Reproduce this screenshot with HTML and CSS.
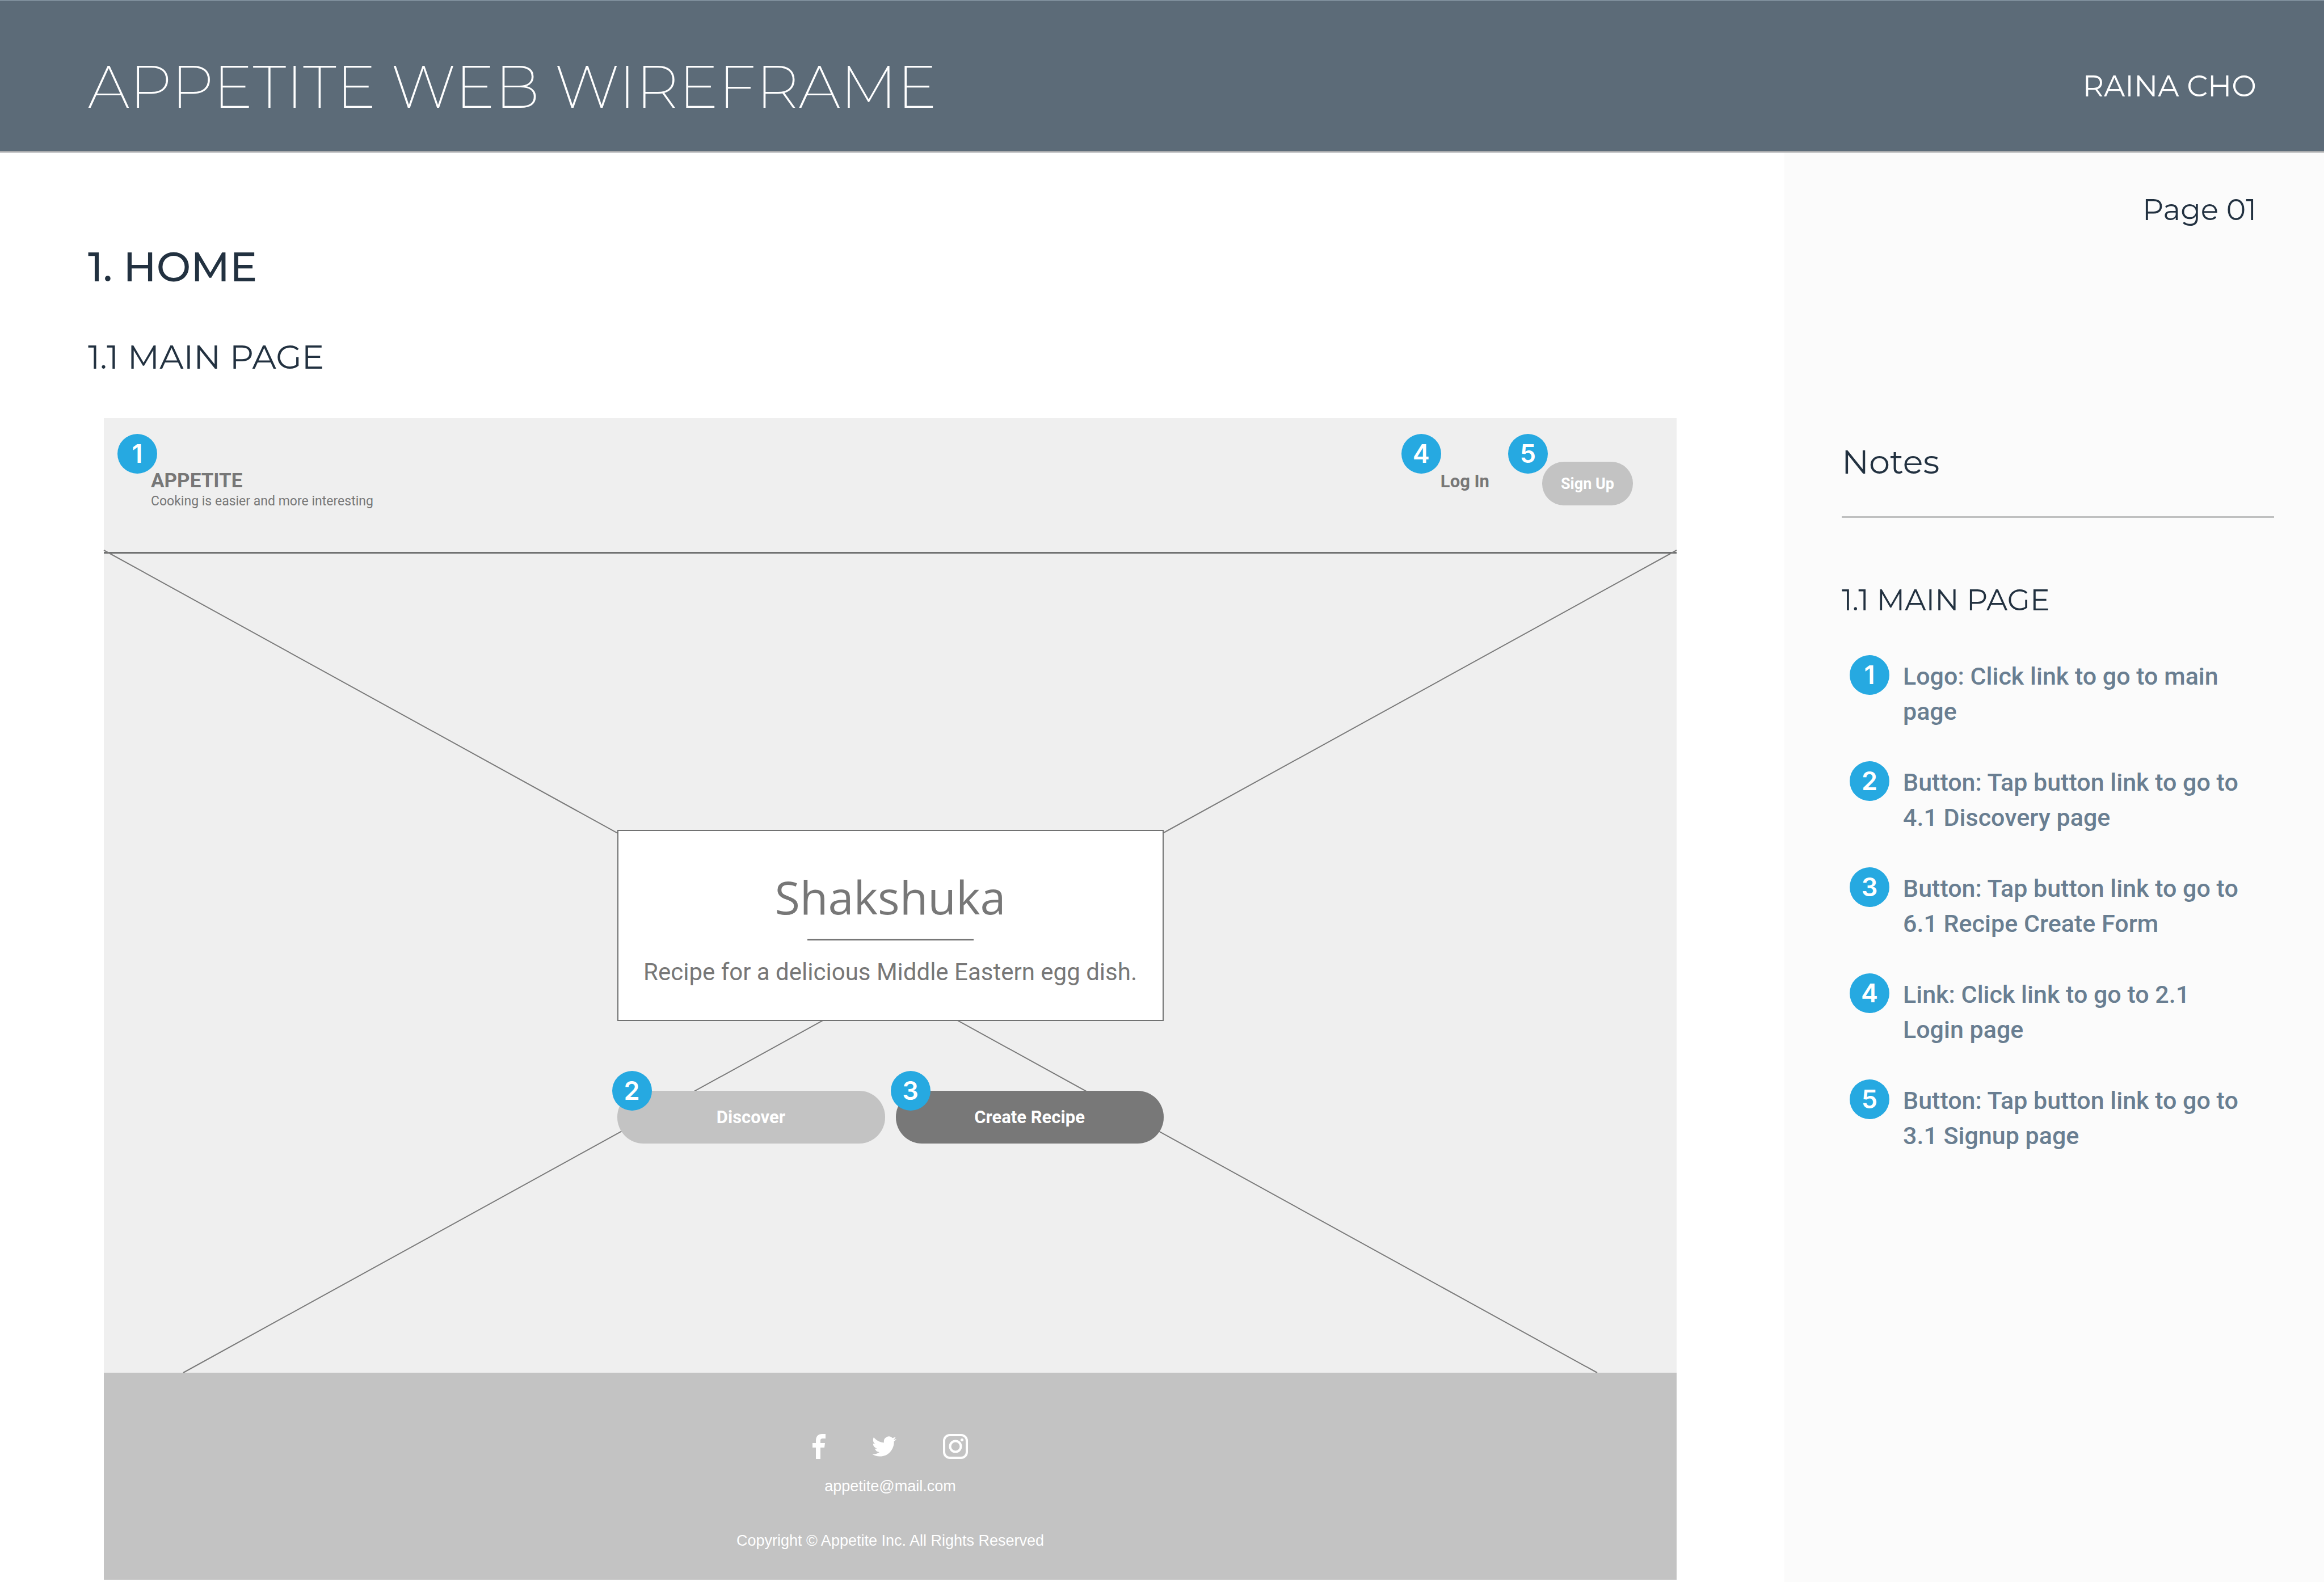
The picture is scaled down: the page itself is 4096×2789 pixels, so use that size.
FILE: index.html
```html
<!DOCTYPE html>
<html lang="en">
<head>
<meta charset="utf-8">
<meta name="viewport" content="width=device-width, initial-scale=1">
<title>Appetite Web Wireframe</title>
<link rel="stylesheet" href="styles.css">
</head>
<body>
<header class="doc-header">
  <h1 class="doc-title">APPETITE WEB WIREFRAME</h1>
  <p class="doc-author">RAINA CHO</p>
</header>
<div class="doc-body">
  <main class="doc-main">
    <h2 class="section-title">1. HOME</h2>
    <h3 class="section-subtitle">1.1 MAIN PAGE</h3>
    <div class="mock">
      <span class="badge badge-brand">1</span>
      <div class="mock-nav">
        <a class="brand" href="#">
          <span class="brand-name">APPETITE</span>
          <span class="brand-tagline">Cooking is easier and more interesting</span>
        </a>
        <nav class="nav-actions">
          <div class="anchor">
            <a class="login" href="#">Log In</a>
            <span class="badge badge-login">4</span>
          </div>
          <div class="anchor">
            <button class="signup" type="button">Sign Up</button>
            <span class="badge badge-signup">5</span>
          </div>
        </nav>
      </div>
      <div class="hero">
        <svg class="hero-cross" viewBox="0 0 2772 1444" preserveAspectRatio="none" aria-hidden="true">
          <path d="M0-6 2632 1444M2772-6 140 1444" fill="none" stroke="#7b7b7b" stroke-width="2"/>
        </svg>
        <section class="hero-card">
          <h4 class="hero-title">Shakshuka</h4>
          <hr class="hero-rule">
          <p class="hero-text">Recipe for a delicious Middle Eastern egg dish.</p>
        </section>
        <div class="hero-buttons">
          <div class="anchor">
            <button class="hero-button" type="button">Discover</button>
            <span class="badge badge-button">2</span>
          </div>
          <div class="anchor">
            <button class="hero-button hero-button-dark" type="button">Create Recipe</button>
            <span class="badge badge-button">3</span>
          </div>
        </div>
      </div>
      <footer class="mock-footer">
        <div class="social">
          <a href="#" aria-label="Facebook"><svg width="23" height="44" viewBox="0 0 23 44"><path d="M6 44V24H0v-8h6v-4C6 4 10 0 17 0h6v8h-4c-4 0-5 1-5 4v4h8l-1 8h-7v20z" fill="#fff"/></svg></a>
          <a href="#" aria-label="Twitter"><svg width="43" height="36" viewBox="0 2 24 20" preserveAspectRatio="none"><path d="M23.953 4.57a10 10 0 0 1-2.825.775 4.958 4.958 0 0 0 2.163-2.723c-.951.555-2.005.959-3.127 1.184a4.92 4.92 0 0 0-8.384 4.482C7.69 8.095 4.067 6.13 1.64 3.162a4.822 4.822 0 0 0-.666 2.475c0 1.71.87 3.213 2.188 4.096a4.904 4.904 0 0 1-2.228-.616v.06a4.923 4.923 0 0 0 3.946 4.827 4.996 4.996 0 0 1-2.212.085 4.936 4.936 0 0 0 4.604 3.417 9.867 9.867 0 0 1-6.102 2.105c-.39 0-.779-.023-1.17-.067a13.995 13.995 0 0 0 7.557 2.209c9.053 0 13.998-7.496 13.998-13.985 0-.21 0-.42-.015-.63A9.935 9.935 0 0 0 24 4.59z" fill="#fff"/></svg></a>
          <a href="#" aria-label="Instagram"><svg width="44" height="44" viewBox="0 0 44 44" fill="none" stroke="#fff" stroke-width="4"><rect x="2" y="2" width="40" height="40" rx="10"/><circle cx="22" cy="22" r="9.5"/><circle cx="33.500" cy="10.500" r="2.600" fill="#fff" stroke="none"/></svg></a>
        </div>
        <a class="footer-mail" href="mailto:appetite@mail.com">appetite@mail.com</a>
        <p class="footer-copy">Copyright © Appetite Inc. All Rights Reserved</p>
      </footer>
    </div>
  </main>
  <aside class="doc-notes">
    <p class="page-number">Page 01</p>
    <h2 class="notes-title">Notes</h2>
    <h3 class="notes-subtitle">1.1 MAIN PAGE</h3>
    <ol class="notes-list">
      <li><span class="badge">1</span><p>Logo: Click link to go to main page</p></li>
      <li><span class="badge">2</span><p>Button: Tap button link to go to 4.1 Discovery page</p></li>
      <li><span class="badge">3</span><p>Button: Tap button link to go to 6.1 Recipe Create Form</p></li>
      <li><span class="badge">4</span><p>Link: Click link to go to 2.1 Login page</p></li>
      <li><span class="badge">5</span><p>Button: Tap button link to go to 3.1 Signup page</p></li>
    </ol>
  </aside>
</div>
</body>
</html>
```
FILE: styles.css
```css
:root {
  --ink: #223140;
  --slate: #5c6b78;
  --note: #697e91;
  --blue: #26a9e1;
  --gray: #777;
  --silver: #c3c3c3;
  --heading-font: Montserrat, Inter, sans-serif;
  --body-font: Roboto, sans-serif;
}

* {
  box-sizing: border-box;
}

body {
  display: flex;
  flex-direction: column;
  min-height: 100vh;
  margin: 0;
  background: #fff;
  color: var(--ink);
  font-family: var(--body-font);
}

h1, h2, h3, h4, p, ol {
  margin: 0;
  padding: 0;
}

a {
  color: inherit;
  text-decoration: none;
}

button {
  border: 0;
  padding: 0;
  color: #fff;
  font-family: inherit;
  font-weight: 700;
  cursor: pointer;
}

/* Document header */
.doc-header {
  display: flex;
  align-items: center;
  justify-content: space-between;
  height: 269px;
  padding: 36px 119px 0 155px;
  border-top: 1px solid #93a3b0;
  border-bottom: 3px solid #a9abad;
  background: var(--slate);
  color: #fff;
  font-family: var(--heading-font);
}

.doc-title {
  font-size: 105px;
  font-weight: 200;
  line-height: 120px;
}

.doc-author {
  font-size: 52px;
  line-height: 64px;
}

.doc-body {
  display: grid;
  flex: 1;
  grid-template-columns: minmax(0, 1fr) 951px;
}

.doc-main {
  padding: 159px 190px 4px 155px;
}

.section-title,
.section-subtitle,
.page-number,
.notes-title,
.notes-subtitle {
  font-family: var(--heading-font);
  font-weight: 400;
}

.section-title {
  font-size: 72px;
  font-weight: 500;
  line-height: 84px;
}

.section-subtitle {
  margin-top: 81px;
  font-size: 59px;
  line-height: 72px;
}

/* Numbered callouts */
.badge {
  display: flex;
  flex: none;
  align-items: center;
  justify-content: center;
  width: 70px;
  height: 70px;
  border-radius: 50%;
  background: var(--blue);
  color: #fff;
  font-family: Inter, sans-serif;
  font-size: 45px;
  font-weight: 600;
  line-height: 70px;
}

.anchor,
.mock {
  position: relative;
}

.anchor .badge,
.badge-brand {
  position: absolute;
  z-index: 1;
}

.badge-brand {
  top: 28px;
  left: 24px;
}

.anchor .badge-login {
  top: -49px;
  left: -69px;
}

.anchor .badge-signup {
  top: -49px;
  left: -60px;
}

.anchor .badge-button {
  top: -35px;
  left: -9px;
}

/* Wireframe */
.mock {
  margin: 72px 0 0 28px;
  background: #efefef;
  color: var(--gray);
}

.mock-nav {
  display: flex;
  align-items: flex-start;
  justify-content: space-between;
  padding: 77px 77px 73px 83px;
  border-bottom: 3px solid #717272;
}

.brand {
  display: flex;
  flex-direction: column;
  padding-top: 14px;
}

.brand-name {
  font-size: 35px;
  font-weight: 700;
  line-height: 40px;
}

.brand-tagline {
  font-size: 23px;
  line-height: 32px;
}

.nav-actions {
  display: flex;
  gap: 93px;
}

.login {
  display: block;
  font-size: 31px;
  font-weight: 700;
  line-height: 70px;
}

.signup {
  display: block;
  width: 160px;
  height: 77px;
  border-radius: 38px;
  background: var(--silver);
  font-size: 27px;
}

.hero {
  position: relative;
  display: flex;
  flex-direction: column;
  align-items: center;
  gap: 123px;
  padding: 487px 0 404px;
}

.hero-cross {
  position: absolute;
  inset: 0;
  width: 100%;
  height: 100%;
  overflow: visible;
}

.hero-card {
  position: relative;
  display: flex;
  flex-direction: column;
  align-items: center;
  width: 963px;
  padding: 68px 0 54px;
  border: 2px solid #717272;
  background: #fff;
}

.hero-title {
  font-family: "Open Sans", sans-serif;
  font-size: 81px;
  font-weight: 400;
  line-height: 96px;
}

.hero-rule {
  width: 293px;
  height: 3px;
  margin: 26px 0;
  border: 0;
  background: var(--gray);
}

.hero-text {
  font-size: 42px;
  line-height: 60px;
}

.hero-buttons {
  display: grid;
  grid-template-columns: 1fr 1fr;
  gap: 19px;
  width: 963px;
}

.hero-button {
  display: block;
  width: 100%;
  height: 93px;
  border-radius: 46px;
  background: var(--silver);
  font-size: 31px;
}

.hero-button-dark {
  background: #787878;
}

.mock-footer {
  display: flex;
  flex-direction: column;
  align-items: center;
  padding: 108px 0 49px;
  background: var(--silver);
  color: #fff;
  font-family: "Liberation Sans", sans-serif;
  font-size: 27px;
  line-height: 40px;
}

.social {
  display: flex;
  align-items: center;
  gap: 82px;
  height: 44px;
}

.social svg {
  display: block;
}

.footer-mail {
  margin-top: 28px;
}

.footer-copy {
  margin-top: 56px;
}

/* Notes column */
.doc-notes {
  padding: 69px 88px 69px 101px;
  background: #fbfbfb;
}

.page-number {
  padding-right: 31px;
  font-size: 52px;
  line-height: 64px;
  text-align: right;
}

.notes-title {
  margin-top: 376px;
  padding-bottom: 60px;
  border-bottom: 3px solid #bfc0c0;
  font-size: 59px;
  line-height: 72px;
}

.notes-subtitle {
  margin-top: 113px;
  font-size: 52px;
  line-height: 64px;
}

.notes-list {
  display: grid;
  gap: 57px;
  margin-top: 65px;
  padding: 0 33px 0 14px;
  color: var(--note);
  list-style: none;
}

.notes-list li {
  display: flex;
  align-items: flex-start;
  gap: 24px;
}

.notes-list p {
  padding-top: 6px;
  font-size: 43px;
  font-weight: 500;
  line-height: 62px;
}
```
